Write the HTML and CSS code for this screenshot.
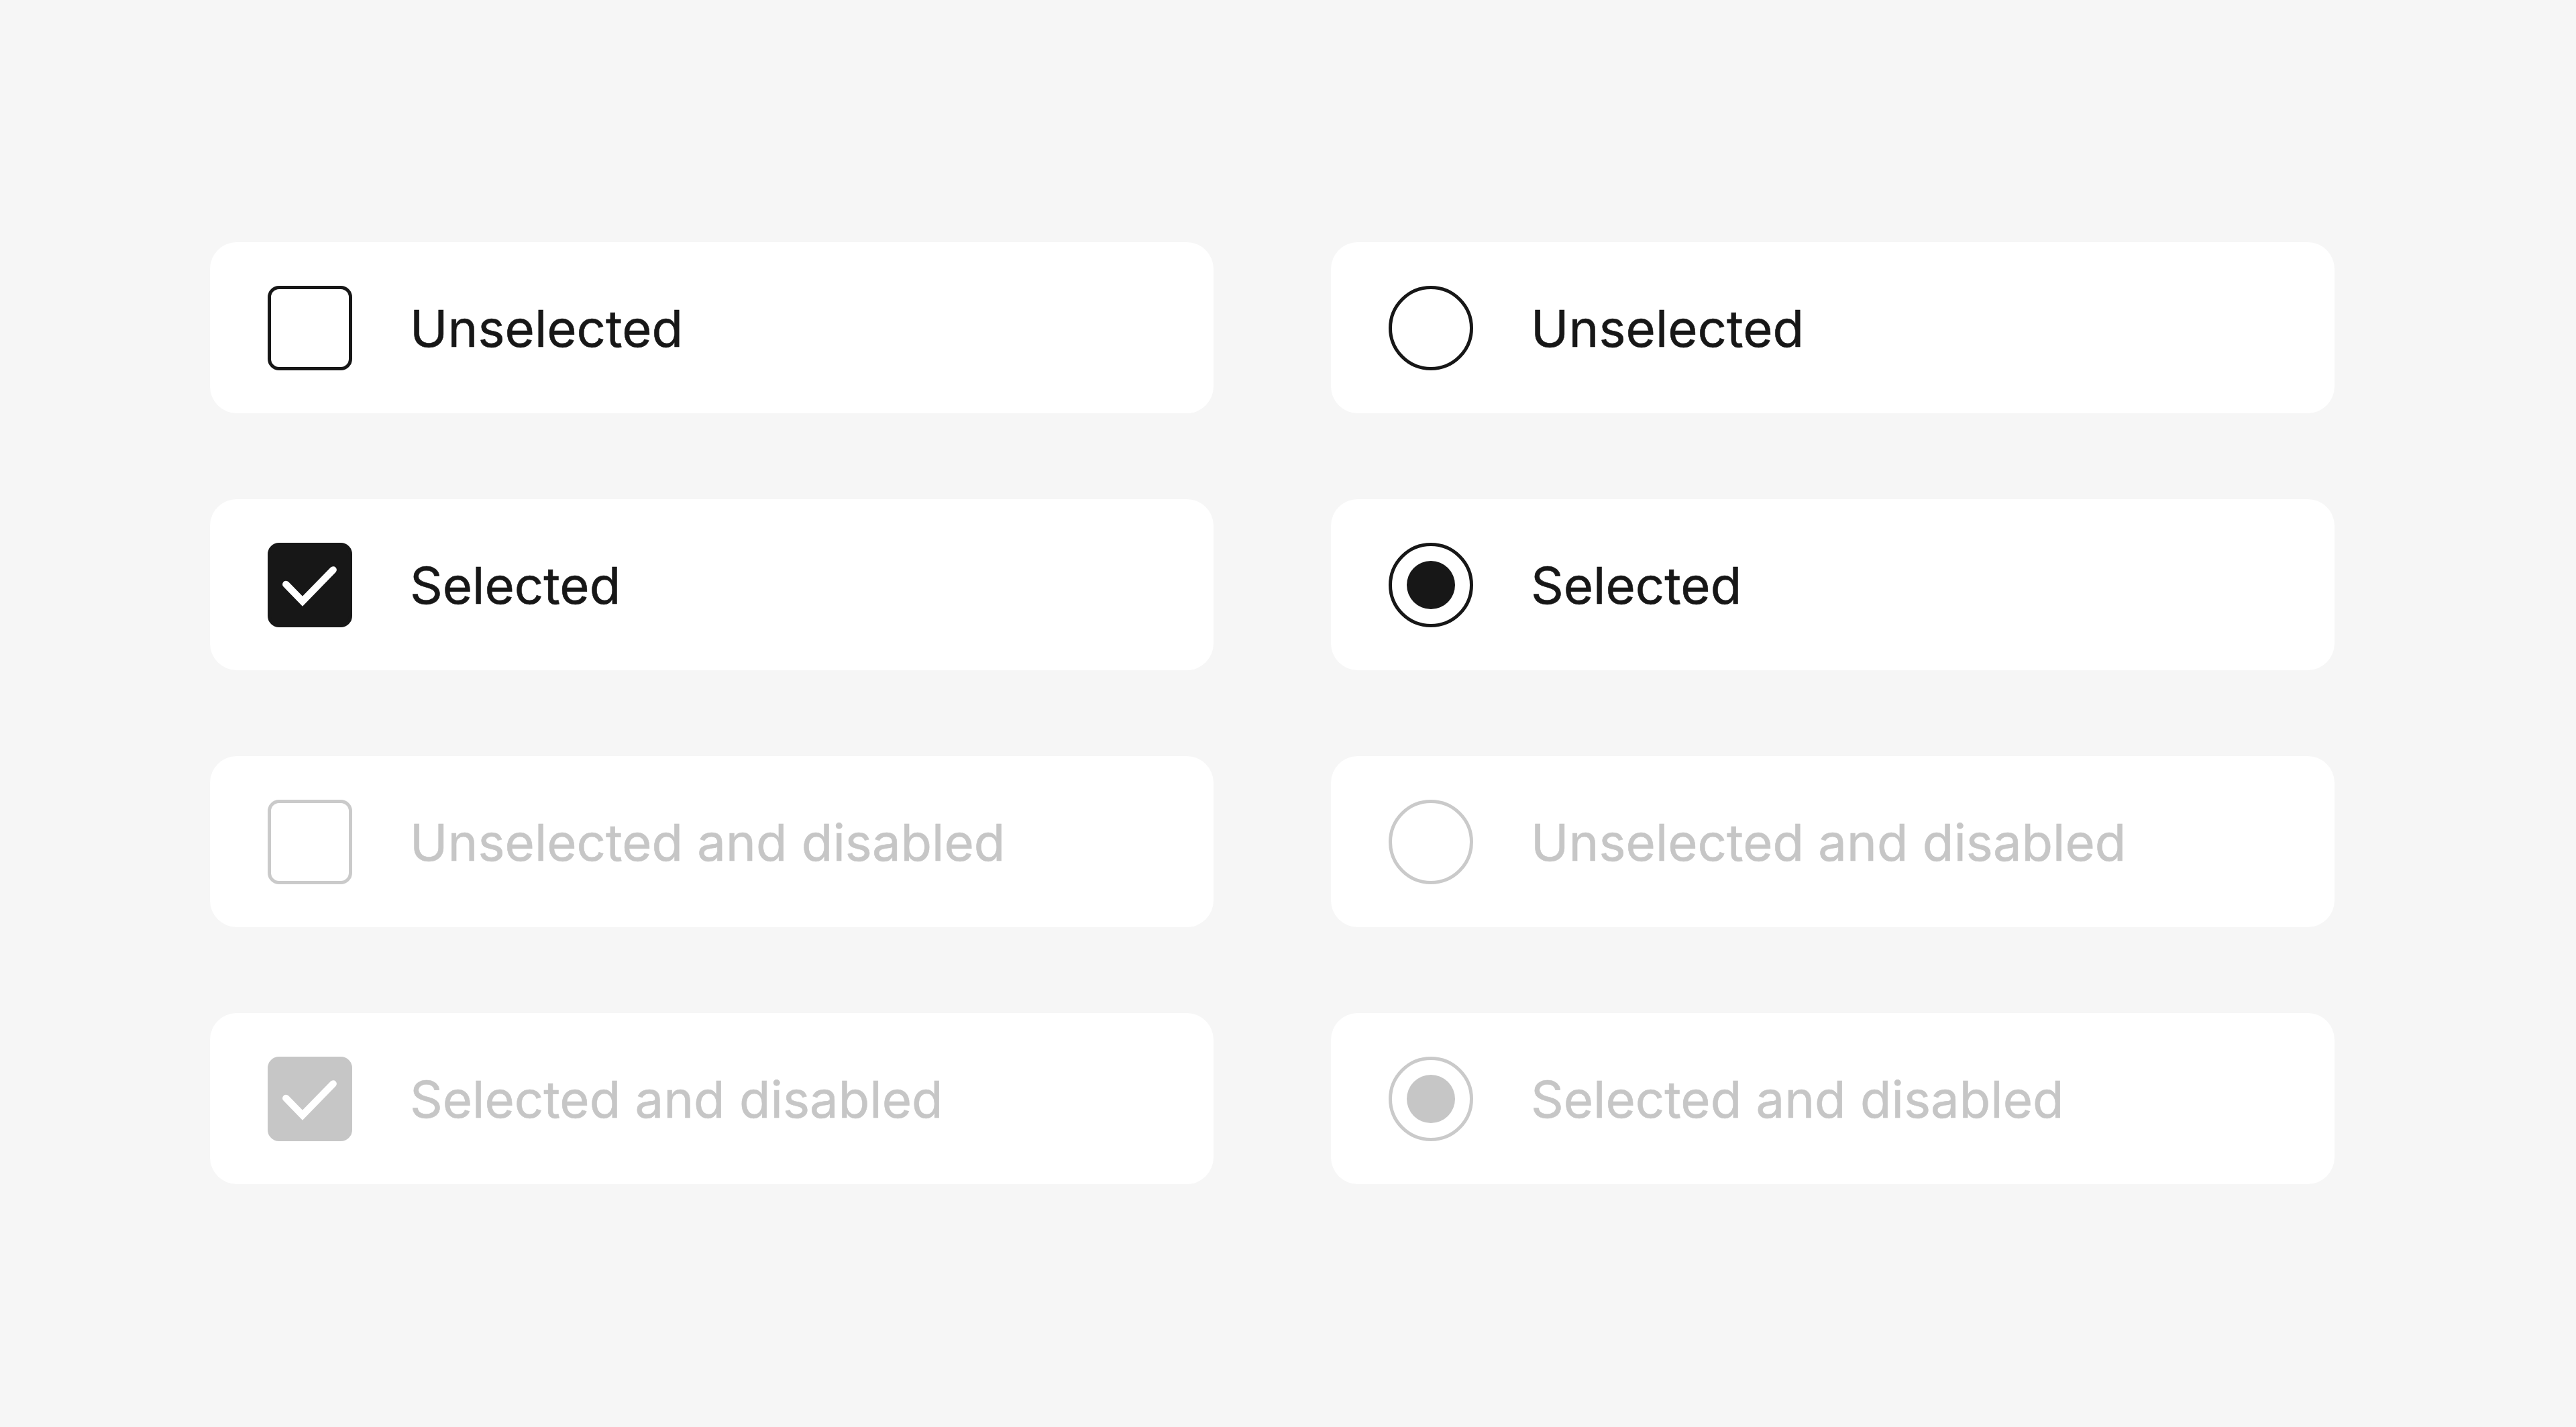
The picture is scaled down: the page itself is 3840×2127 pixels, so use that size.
FILE: index.html
```html
<!DOCTYPE html>
<html lang="en">
  <head>
    <meta charset="UTF-8" />
    <meta name="viewport" content="width=device-width, initial-scale=1.0" />
    <title>Selection controls</title>
    <link rel="stylesheet" href="styles.css">
  </head>
  <body>
    <main class="controls-grid">
      <!-- checkboxes on the left, radios on the right -->
      <label class="option">
        <span class="checkbox"></span>
        <span class="option-label">Unselected</span>
      </label>
      <label class="option">
        <span class="radio"></span>
        <span class="option-label">Unselected</span>
      </label>

      <label class="option">
        <span class="checkbox checked">
          <svg viewBox="0 0 24 24"><path d="M5.2 11.8 9.9 16.6 18.6 7.7" /></svg>
        </span>
        <span class="option-label">Selected</span>
      </label>
      <label class="option">
        <span class="radio checked"><span class="dot"></span></span>
        <span class="option-label">Selected</span>
      </label>

      <label class="option disabled">
        <span class="checkbox"></span>
        <span class="option-label">Unselected and disabled</span>
      </label>
      <label class="option disabled">
        <span class="radio"></span>
        <span class="option-label">Unselected and disabled</span>
      </label>

      <label class="option disabled">
        <span class="checkbox checked">
          <svg viewBox="0 0 24 24"><path d="M5.2 11.8 9.9 16.6 18.6 7.7" /></svg>
        </span>
        <span class="option-label">Selected and disabled</span>
      </label>
      <label class="option disabled">
        <span class="radio checked"><span class="dot"></span></span>
        <span class="option-label">Selected and disabled</span>
      </label>
    </main>
  </body>
</html>
```

FILE: styles.css
```css
* {
  margin: 0;
  padding: 0;
  box-sizing: border-box;
}

:root {
  --bg: #f6f6f6;
  --card-bg: #ffffff;
  --ink: #171717;
  --muted: #c6c6c6;
}

body {
  min-height: 100vh;
  background-color: var(--bg);
  font-family: "Inter", "Liberation Sans", sans-serif;
  color: var(--ink);
}

.controls-grid {
  display: grid;
  grid-template-columns: repeat(2, 1496px);
  grid-auto-rows: 255px;
  column-gap: 175px;
  row-gap: 128px;
  padding: 361px 0 0 313px;
}

.option {
  display: flex;
  align-items: center;
  gap: 86px;
  padding: 0 86px;
  background-color: var(--card-bg);
  border-radius: 40px;
}

.option-label {
  font-size: 76px;
  font-weight: 400;
  letter-spacing: 0;
  line-height: 1;
  -webkit-text-stroke: 0.6px currentColor;
}

.checkbox,
.radio {
  flex: none;
  width: 126px;
  height: 126px;
  border: 5px solid var(--ink);
  display: flex;
  align-items: center;
  justify-content: center;
}

.checkbox {
  border-radius: 17px;
}

.checkbox.checked {
  background-color: var(--ink);
}

.checkbox svg {
  width: 126px;
  height: 126px;
  flex: none;
}

.checkbox path {
  fill: none;
  stroke: #ffffff;
  stroke-width: 2;
  stroke-linecap: round;
  stroke-linejoin: miter;
}

.radio {
  border-radius: 50%;
}

.dot {
  width: 72px;
  height: 72px;
  border-radius: 50%;
  background-color: var(--ink);
}

/* disabled rows fade everything to grey */
.disabled .option-label {
  color: var(--muted);
}

.disabled .checkbox,
.disabled .radio {
  border-color: #cacaca;
}

.disabled .checkbox.checked,
.disabled .dot {
  background-color: var(--muted);
}

.disabled .checkbox.checked {
  border-color: var(--muted);
}
```
